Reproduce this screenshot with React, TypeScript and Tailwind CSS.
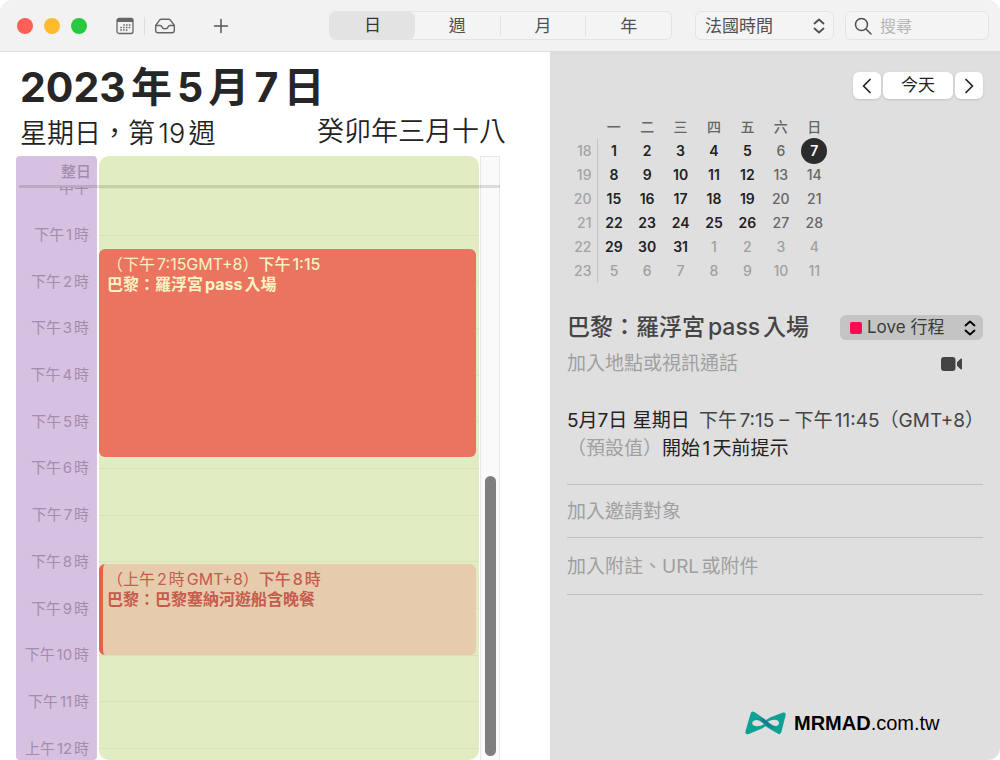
import { useState } from "react";

const FIRST_HOUR = 11.5;
const HOURS_SHOWN = 13;

const hourLabels = [
  "中午",
  "下午1時",
  "下午2時",
  "下午3時",
  "下午4時",
  "下午5時",
  "下午6時",
  "下午7時",
  "下午8時",
  "下午9時",
  "下午10時",
  "下午11時",
  "上午12時",
];

const views = ["日", "週", "月", "年"];
const weekdays = ["一", "二", "三", "四", "五", "六", "日"];

const weeks = [
  { no: 18, days: [1, 2, 3, 4, 5, 6, 7] },
  { no: 19, days: [8, 9, 10, 11, 12, 13, 14] },
  { no: 20, days: [15, 16, 17, 18, 19, 20, 21] },
  { no: 21, days: [22, 23, 24, 25, 26, 27, 28] },
  { no: 22, days: [29, 30, 31, 1, 2, 3, 4] },
  { no: 23, days: [5, 6, 7, 8, 9, 10, 11] },
];

const events = [
  {
    start: 13.25,
    end: 17.75,
    zone: "（下午7:15GMT+8）",
    time: "下午1:15",
    title: "巴黎：羅浮宮pass入場",
    box: "pl-2 bg-[#eb7460] text-[#f6f3c3]",
  },
  {
    start: 20,
    end: 22,
    zone: "（上午2時GMT+8）",
    time: "下午8時",
    title: "巴黎：巴黎塞納河遊船含晚餐",
    box: "pl-1 bg-[#e6ccac] text-[#c75b4c] border-l-4 border-[#ea5f4b]",
  },
];

function UpDown({ className }: { className: string }) {
  return (
    <svg className={className} viewBox="0 0 12 16" fill="none" stroke="currentColor" strokeWidth={1.8} strokeLinecap="round" strokeLinejoin="round">
      <path d="M1.500 5.500L6 1.500l4.500 4M1.500 10.500l4.500 4 4.500-4" />
    </svg>
  );
}

function Toolbar() {
  const [view, setView] = useState("日");

  return (
    <header className="h-[52px] shrink-0 flex items-center pr-[11px] bg-[#f2f2f2] border-b border-[#dcdcdc] text-[17px] text-[#505050]">
      <div className="flex-1 flex items-center pl-[17px]">
        <div className="flex gap-[11px]">
          <button aria-label="關閉" className="w-4 h-4 rounded-full bg-[#fe5f57]" />
          <button aria-label="縮小" className="w-4 h-4 rounded-full bg-[#febb2e]" />
          <button aria-label="放大" className="w-4 h-4 rounded-full bg-[#28c840]" />
        </div>
        <button aria-label="行事曆" className="ml-[29px] text-[#666]">
          <svg className="w-[18px] h-[18px]" viewBox="0 0 18 18" fill="none" stroke="currentColor">
            <rect x="1" y="1.5" width="16" height="15" rx="2" strokeWidth={1.3} />
            <path d="M1 5V3q0-1.700 2-1.700h12q2 0 2 1.700v2z" fill="currentColor" stroke="none" />
            <path d="M7.300 8h7.500M4.300 10.500h10.500M4.300 13h7.500" strokeWidth={1.500} strokeDasharray="1.500 1.300" />
          </svg>
        </button>
        <div className="ml-[10px] w-px h-[18px] bg-[#dedede]" />
        <button aria-label="收件匣" className="ml-[9px] text-[#666]">
          <svg className="w-[22px] h-[18px]" viewBox="0 0 22 18" fill="none" stroke="currentColor" strokeWidth={1.400} strokeLinejoin="round" strokeLinecap="round">
            <path d="M1.700 8.500L5.500 3.200Q6.200 2.200 7.500 2.200h7q1.300 0 2 1L20.300 8.500v5q0 2.300-2.300 2.300H4q-2.300 0-2.300-2.300z" />
            <path d="M1.700 8.500h4.500q1.300 0 1.600 1.300.6 2 3.200 2t3.200-2q.3-1.300 1.600-1.300h4.500" />
          </svg>
        </button>
        <button aria-label="新增行程" className="ml-[37px] text-[#555]">
          <svg className="w-4 h-4" viewBox="0 0 16 16" fill="none" stroke="currentColor" strokeWidth={1.500} strokeLinecap="round">
            <path d="M8 1.500v13M1.500 8h13" />
          </svg>
        </button>
      </div>

      <div className="w-[343px] h-[29px] flex items-center rounded-md border border-[#e3e3e3] bg-[#f4f4f4]">
        {views.map((item, i) => (
          <button
            key={item}
            onClick={() => setView(item)}
            className={`flex-1 ${
              view === item ? "h-full rounded-md bg-[#e3e3e3] text-[#333]" : i > 1 ? "h-5 leading-5 border-l border-[#e3e3e3]" : "h-5 leading-5"
            }`}
          >
            {item}
          </button>
        ))}
      </div>

      <div className="relative ml-[23px]">
        <select
          aria-label="時區"
          className="appearance-none w-[139px] h-[29px] pl-[9px] rounded-md border border-[#e3e3e3] bg-[#f4f4f4] leading-5"
        >
          <option>法國時間</option>
        </select>
        <UpDown className="absolute right-[9px] top-[7px] w-3 h-4 pointer-events-none" />
      </div>

      <label className="ml-[11px] w-[144px] h-[29px] flex items-center gap-2 pl-2 rounded-md border border-[#e3e3e3] bg-[#f4f4f4]">
        <svg className="w-[18px] h-[18px] shrink-0" viewBox="0 0 18 18" fill="none" stroke="currentColor" strokeWidth={1.500} strokeLinecap="round">
          <circle cx="7.500" cy="7.500" r="6" />
          <path d="M12 12l5 5" />
        </svg>
        <input type="search" aria-label="搜尋" placeholder="搜尋" className="w-full min-w-0 text-[16px] leading-5 outline-none placeholder:text-[#b5b5b5]" />
      </label>
    </header>
  );
}

function DayView() {
  return (
    <main className="w-[55%] flex flex-col bg-white pt-[13px] pl-4">
      <h1 className="pl-1 text-[41px] leading-[44px] font-bold text-[#262626] whitespace-nowrap">2023年5月7日</h1>
      <div className="mt-1 pl-1 pr-[44px] flex justify-between text-[27px] leading-[38px] font-[350] text-[#222] whitespace-nowrap">
        <p className="pt-[2px]">星期日，第19週</p>
        <p>癸卯年三月十八</p>
      </div>

      <div className="relative mt-[3px] mr-[50px] flex-1 min-h-0 flex">
        {/* Hour labels */}
        <div className="w-[81px] mr-[2px] flex flex-col rounded-sm bg-[#d6c1e0] text-[15px] text-right text-[#a28daf]">
          <div className="h-[31px] shrink-0 pr-[6px] leading-[31px] font-medium">整日</div>
          <div className="flex-1 min-h-0 overflow-hidden">
            <ol className="-mt-[22px] h-[607px] grid grid-rows-[repeat(13,minmax(0,1fr))] pr-2">
              {hourLabels.map((label) => (
                <li key={label} className="flex items-center justify-end leading-5 whitespace-nowrap">
                  <span>{label}</span>
                </li>
              ))}
            </ol>
          </div>
        </div>

        {/* Day column */}
        <div className="flex-1 flex flex-col rounded-[10px] overflow-hidden bg-[#e1ecc2]">
          <div className="h-[31px] shrink-0" />
          <div className="flex-1 min-h-0 overflow-hidden">
            <div className="relative -mt-[22px] h-[607px] grid grid-rows-[repeat(13,minmax(0,1fr))]">
              {hourLabels.map((label) => (
                <div key={label} className="flex items-center">
                  <div className="w-full h-px bg-[#d8e3bb]" />
                </div>
              ))}
              {events.map((event) => (
                <div
                  key={event.title}
                  className="absolute inset-x-0 pt-[2px] pr-[3px]"
                  style={{
                    top: `${((event.start - FIRST_HOUR) / HOURS_SHOWN) * 100}%`,
                    height: `${((event.end - event.start) / HOURS_SHOWN) * 100}%`,
                  }}
                >
                  <div className={`h-full rounded-md pt-[5px] text-base leading-5 whitespace-nowrap overflow-hidden ${event.box}`}>
                    <p>
                      {event.zone}
                      <span className="font-medium">{event.time}</span>
                    </p>
                    <p className="font-bold">{event.title}</p>
                  </div>
                </div>
              ))}
            </div>
          </div>
        </div>

        {/* Scroll bar */}
        <div className="w-5 ml-px flex flex-col items-center justify-end pb-1 border-x border-t border-[#e8e8e8] bg-[#fafafa]">
          <div className="w-[11px] h-[280px] rounded-full bg-[#7f7f7f]" />
        </div>

        <div className="absolute left-[3px] right-0 top-[29px] h-[3px] bg-black/12" />
      </div>
    </main>
  );
}

function MiniMonth() {
  return (
    <table className="mt-4 w-[264px] table-fixed text-sm text-center">
      <thead>
        <tr className="h-6 text-[#666]">
          <th className="w-[30px]" aria-label="週數" />
          {weekdays.map((d) => (
            <th key={d} className="p-0 font-medium">
              {d}
            </th>
          ))}
        </tr>
      </thead>
      <tbody>
        {weeks.map((week, row) => (
          <tr key={week.no} className="h-6 leading-6">
            <th className="p-0 pr-[5px] text-right font-medium text-[#a3a3a3] border-r border-[#c4c4c4]">{week.no}</th>
            {week.days.map((day, col) => {
              const nextMonth = row > 3 && day < 20;
              const today = row === 0 && day === 7;
              const color = nextMonth ? "font-medium text-[#a0a0a0]" : col > 4 ? "font-medium text-[#666]" : "font-semibold text-[#222]";
              return (
                <td key={col} className={`p-0 ${color}`}>
                  {today ? (
                    <span className="-my-px mx-auto w-[26px] h-[26px] leading-[26px] block rounded-full bg-[#2b2b2b] text-white font-semibold">{day}</span>
                  ) : (
                    day
                  )}
                </td>
              );
            })}
          </tr>
        ))}
      </tbody>
    </table>
  );
}

function Logo() {
  return (
    <a href="#mrmad" className="mt-auto mb-[25px] ml-[178px] flex items-center gap-2 text-black font-['Liberation_Sans',sans-serif] text-xl leading-6">
      <svg className="w-[41px] h-6" viewBox="0 0 41 24">
        <defs>
          <linearGradient id="band" gradientUnits="userSpaceOnUse" x1="10" y1="6" x2="32" y2="18">
            <stop offset="0.1" stopColor="#0fa194" />
            <stop offset="0.4" stopColor="#1a7891" />
            <stop offset="0.6" stopColor="#1a7891" />
            <stop offset="0.95" stopColor="#0fa194" />
          </linearGradient>
        </defs>
        <path
          fill="#0fa194"
          fillRule="evenodd"
          d="M9.500 1Q6.500-.3 5.600 2.500L.4 20.500Q0 23.800 3.200 23.200L17 17.500 20.500 15.200 24 17.500 33 22.800Q35.500 24 36.400 21L40.700 4Q41 .8 38 1.600L25 6.600 21 9 17 6.200zM12.500 9C5.500 9 5.500 15.200 12 15.200Q16 15.200 19 13L15 10Q14 9 12.500 9zM22 11Q26 8.800 29.500 8.800C35.500 8.800 35.500 15.200 29.500 15.200Q27.500 15.200 26 14z"
        />
        <path d="M12 7.200Q15.500 7.400 18 9.400L25 14.800Q27.500 16.700 30.500 16.900" fill="none" stroke="url(#band)" strokeWidth={3.600} />
      </svg>
      <span>
        <b>MRMAD</b>.com.tw
      </span>
    </a>
  );
}

function Inspector() {
  return (
    <aside className="flex-1 min-w-0 flex flex-col bg-[#dfdfdf] pt-5 px-[17px] text-[19px] text-[#222]">
      <div className="flex justify-end gap-[2px] text-[17px]">
        <button aria-label="前一天" className="w-7 h-[27px] flex items-center justify-center rounded-md bg-white shadow-sm">
          <svg className="w-4 h-4" viewBox="0 0 16 16" fill="none" stroke="currentColor" strokeWidth={1.700} strokeLinecap="round" strokeLinejoin="round">
            <path d="M11 1.500L4.500 8l6.500 6.500" />
          </svg>
        </button>
        <button className="w-[70px] h-[27px] leading-[27px] rounded-md bg-white shadow-sm">今天</button>
        <button aria-label="後一天" className="w-7 h-[27px] flex items-center justify-center rounded-md bg-white shadow-sm">
          <svg className="w-4 h-4" viewBox="0 0 16 16" fill="none" stroke="currentColor" strokeWidth={1.700} strokeLinecap="round" strokeLinejoin="round">
            <path d="M5 1.500L11.500 8 5 14.500" />
          </svg>
        </button>
      </div>

      <MiniMonth />

      <div className="mt-[30px] flex items-center justify-between">
        <h2 className="text-[23px] leading-7 font-medium text-[#444] whitespace-nowrap">巴黎：羅浮宮pass入場</h2>
        <div className="relative text-[17px]">
          <span className="absolute left-[10px] top-[7px] w-3 h-3 rounded-[2px] bg-[#fb0a52] pointer-events-none" />
          <select aria-label="行事曆" className="appearance-none block w-[143px] h-[25px] pl-[27px] rounded-md bg-[#c4c4c4] text-[#3a3a3a] leading-[25px]">
            <option>Love 行程</option>
          </select>
          <UpDown className="absolute right-[7px] top-[5px] w-3 h-4 text-black pointer-events-none" />
        </div>
      </div>

      <div className="mt-[9px] flex items-center">
        <input aria-label="地點" placeholder="加入地點或視訊通話" className="flex-1 min-w-0 h-7 outline-none placeholder:text-[#a0a0a0]" />
        <button aria-label="視訊通話" className="mr-5 text-[#444]">
          <svg className="w-[23px] h-4" viewBox="0 0 23 16" fill="currentColor">
            <rect x="1" y="1" width="14.500" height="14" rx="3" />
            <path d="M17 6.200L20.500 2.800Q22 2 22 3.500v9q0 1.500-1.500.7L17 9.800z" />
          </svg>
        </button>
      </div>

      <div className="mt-[29px] leading-7 whitespace-nowrap">
        <p>
          <span className="[text-autospace:no-autospace]">5月7日 星期日</span> <span className="ml-1 text-[#444]">下午7:15 – 下午11:45（GMT+8）</span>
        </p>
        <p>
          <span className="text-[#a0a0a0]">（預設值）</span>開始1天前提示
        </p>
      </div>

      <div className="mt-[21px] border-y border-[#c0c0c0]">
        <input aria-label="邀請對象" placeholder="加入邀請對象" className="block w-full h-[52px] outline-none placeholder:text-[#a0a0a0]" />
      </div>
      <div className="border-b border-[#c0c0c0]">
        <input aria-label="附註" placeholder="加入附註、URL或附件" className="block w-full h-14 outline-none placeholder:text-[#a0a0a0]" />
      </div>

      <Logo />
    </aside>
  );
}

export default function App() {
  return (
    <div
      lang="zh-Hant"
      className="h-screen flex flex-col rounded-xl overflow-hidden bg-white font-['Inter','Noto_Sans_CJK_TC',sans-serif] [text-autospace:normal]"
    >
      <Toolbar />
      <div className="flex-1 min-h-0 flex">
        <DayView />
        <Inspector />
      </div>
    </div>
  );
}
